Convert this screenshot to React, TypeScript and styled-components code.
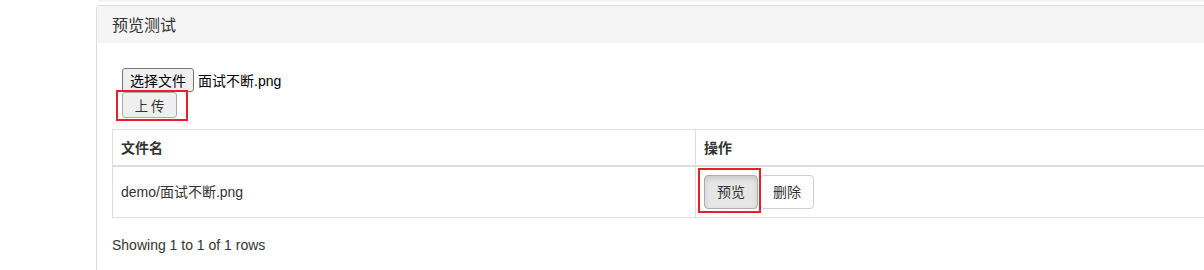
import React from 'react'
import styled, { createGlobalStyle } from 'styled-components'

const GlobalStyle = createGlobalStyle`
  body {
    margin: 0;
    background: #fff;
    font-family: "Liberation Sans", "Noto Sans CJK SC", sans-serif;
    font-size: 14px;
    color: #333;
    overflow: hidden;
  }
`

const Page = styled.div`
  width: 1300px;
  height: 270px;
  overflow: hidden;
  padding-left: 96px;
`

const PrevEdge = styled.div`
  height: 2px;
  margin-left: 2px;
  background: #f3f3f3;
  margin-bottom: 3px;
`

const Panel = styled.div`
  width: 1180px;
  border: 1px solid #ddd;
  border-radius: 4px 0 0 0;
  background: #fff;
`

const PanelHeading = styled.div`
  background: #f5f5f5;
  padding: 11px 15px 8px;
  border-radius: 3px 0 0 0;
  font-size: 16px;
  line-height: 18px;
  color: #333;
`

const PanelBody = styled.div`
  padding: 15px 15px 40px;
`

const UploadForm = styled.div`
  padding: 9px 10px 0;
  display: flex;
  flex-direction: column;
  align-items: flex-start;
`

const FileRow = styled.div`
  display: flex;
  align-items: center;
  height: 25px;
`

const NativeButton = styled.button<{ $wide?: boolean }>`
  font-family: "Liberation Sans", "Noto Sans CJK SC", sans-serif;
  font-size: ${(p) => (p.$wide ? '13.33px' : '14px')};
  background: #efefef;
  border: 1px solid #767676;
  border-radius: 3px;
  height: ${(p) => (p.$wide ? '26px' : '24px')};
  width: ${(p) => (p.$wide ? '55px' : '72px')};
  padding: 0;
  letter-spacing: ${(p) => (p.$wide ? '3px' : '0')};
  text-indent: ${(p) => (p.$wide ? '3px' : '0')};
  color: ${(p) => (p.$wide ? '#333' : '#000')};
  border-color: ${(p) => (p.$wide ? '#aaa' : '#767676')};
`

const FileName = styled.span`
  margin-left: 4px;
  font-size: 14px;
  color: #000;
`

const Marked = styled.span<{ $l: number; $t: number; $r: number; $b: number }>`
  position: relative;
  display: inline-flex;
  &::after {
    content: '';
    position: absolute;
    left: ${(p) => p.$l}px;
    top: ${(p) => p.$t}px;
    right: ${(p) => p.$r}px;
    bottom: ${(p) => p.$b}px;
    border: 2px solid #e5202a;
    pointer-events: none;
  }
`

const Table = styled.table`
  margin-top: 11px;
  width: 1148px;
  border-collapse: collapse;
  border: 1px solid #ddd;
  table-layout: fixed;
`

const Th = styled.th<{ $w?: number }>`
  width: ${(p) => (p.$w ? `${p.$w}px` : 'auto')};
  text-align: left;
  font-weight: bold;
  padding: 8px 8px 7px;
  line-height: 20px;
  border: 1px solid #ddd;
  border-bottom: 2px solid #ddd;
`

const Td = styled.td`
  padding: 8px;
  line-height: 20px;
  border: 1px solid #ddd;
  vertical-align: middle;
`

const Actions = styled.div`
  display: flex;
  align-items: center;
`

const Btn = styled.button<{ $active?: boolean }>`
  font-family: "Liberation Sans", "Noto Sans CJK SC", sans-serif;
  font-size: 14px;
  line-height: 20px;
  height: 34px;
  padding: 6px 12px;
  border-radius: 4px;
  color: #333;
  background: ${(p) => (p.$active ? '#e6e6e6' : '#fff')};
  border: 1px solid ${(p) => (p.$active ? '#adadad' : '#ccc')};
  box-shadow: ${(p) => (p.$active ? 'inset 0 3px 5px rgba(0,0,0,.125)' : 'none')};
`

const GapBtn = styled(Btn)`
  margin-left: 2px;
`

const Footer = styled.div`
  margin-top: 17px;
  line-height: 20px;
  font-size: 14px;
  color: #333;
`

export default function App() {
  return (
    <>
      <GlobalStyle />
      <Page>
        <PrevEdge />
        <Panel>
          <PanelHeading>预览测试</PanelHeading>
          <PanelBody>
            <UploadForm>
              <FileRow>
                <NativeButton>选择文件</NativeButton>
                <FileName>面试不断.png</FileName>
              </FileRow>
              <div>
                <Marked $l={-6} $t={-2} $r={-11} $b={-3}>
                  <NativeButton $wide>上传</NativeButton>
                </Marked>
              </div>
            </UploadForm>
            <Table>
              <thead>
                <tr>
                  <Th $w={566}>文件名</Th>
                  <Th>操作</Th>
                </tr>
              </thead>
              <tbody>
                <tr>
                  <Td>demo/面试不断.png</Td>
                  <Td>
                    <Actions>
                      <Marked $l={-6} $t={-7} $r={-3} $b={-4}>
                        <Btn $active>预览</Btn>
                      </Marked>
                      <GapBtn>删除</GapBtn>
                    </Actions>
                  </Td>
                </tr>
              </tbody>
            </Table>
            <Footer>Showing 1 to 1 of 1 rows</Footer>
          </PanelBody>
        </Panel>
      </Page>
    </>
  )
}
